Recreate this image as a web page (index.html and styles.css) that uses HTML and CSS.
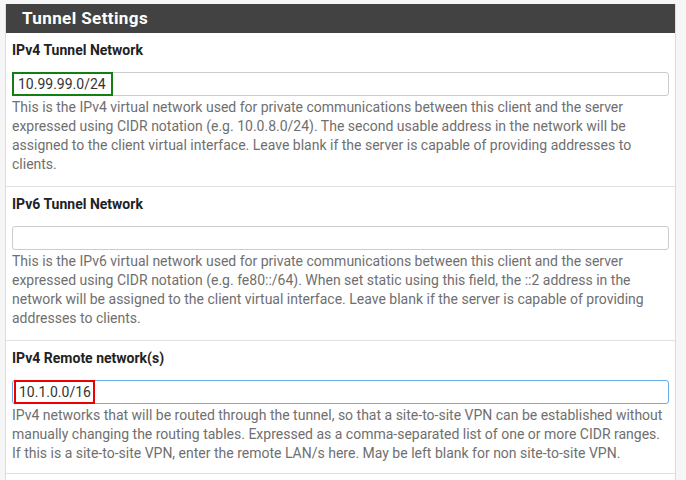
FILE: index.html
```html
<!DOCTYPE html>
<html>
<head>
<meta charset="utf-8">
<link rel="stylesheet" href="styles.css">
</head>
<body>
<div class="panel">
  <div class="panel-heading">Tunnel Settings</div>
  <div class="row">
    <div class="label">IPv4 Tunnel Network</div>
    <div class="input"><span class="mark green">10.99.99.0/24</span></div>
    <div class="help">This is the IPv4 virtual network used for private communications between this client and the server expressed using CIDR notation (e.g. 10.0.8.0/24). The second usable address in the network will be assigned to the client virtual interface. Leave blank if the server is capable of providing addresses to clients.</div>
  </div>
  <div class="row">
    <div class="label">IPv6 Tunnel Network</div>
    <div class="input"></div>
    <div class="help">This is the IPv6 virtual network used for private communications between this client and the server expressed using CIDR notation (e.g. fe80::/64). When set static using this field, the ::2 address in the network will be assigned to the client virtual interface. Leave blank if the server is capable of providing addresses to clients.</div>
  </div>
  <div class="row last">
    <div class="label">IPv4 Remote network(s)</div>
    <div class="input focus"><span class="mark red">10.1.0.0/16</span></div>
    <div class="help">IPv4 networks that will be routed through the tunnel, so that a site-to-site VPN can be established without manually changing the routing tables. Expressed as a comma-separated list of one or more CIDR ranges. If this is a site-to-site VPN, enter the remote LAN/s here. May be left blank for non site-to-site VPN.</div>
  </div>
  <div class="spacer"></div>
</div>
</body>
</html>
```
FILE: styles.css
```css
html, body {
  margin: 0;
  padding: 0;
  background: #f6f6f6;
}
body {
  padding: 4px 10px 0 5px;
  font-family: Roboto, "Liberation Sans", sans-serif;
}
.panel {
  background: #fff;
  border-left: 1px solid #dcdcdc;
  border-right: 1px solid #dcdcdc;
}
.panel-heading {
  background: #424242;
  color: #fff;
  font-weight: bold;
  font-size: 17px;
  letter-spacing: 0.4px;
  height: 29px;
  line-height: 29px;
  padding-left: 16px;
}
.row {
  padding: 7px 6px 12px 6px;
  border-bottom: 1px solid #e0e0e0;
}
.row.last {
  padding-bottom: 10px;
}
.spacer {
  height: 20px;
}
.label {
  font-size: 14px;
  font-weight: bold;
  color: #222;
  line-height: 19px;
  height: 19px;
  margin-top: 1px;
  margin-bottom: 12px;
}
.input {
  box-sizing: border-box;
  height: 24px;
  border: 1px solid #cccccc;
  border-radius: 3px;
  display: flex;
  align-items: stretch;
  font-size: 14px;
  color: #333;
}
.input.focus {
  border-color: #66afe9;
}
.mark {
  display: flex;
  align-items: center;
  margin: -1px 0 -1px -1px;
}
.mark.green {
  border: 2px solid #118011;
  padding: 0 4px;
  width: 89px;
}
.mark.red {
  border: 2px solid #ee0000;
  margin-left: 1px;
  padding: 0 3px;
  width: 71px;
}
.help {
  font-size: 14px;
  color: #6f6f6f;
  line-height: 19px;
  margin-top: 2px;
}
```
